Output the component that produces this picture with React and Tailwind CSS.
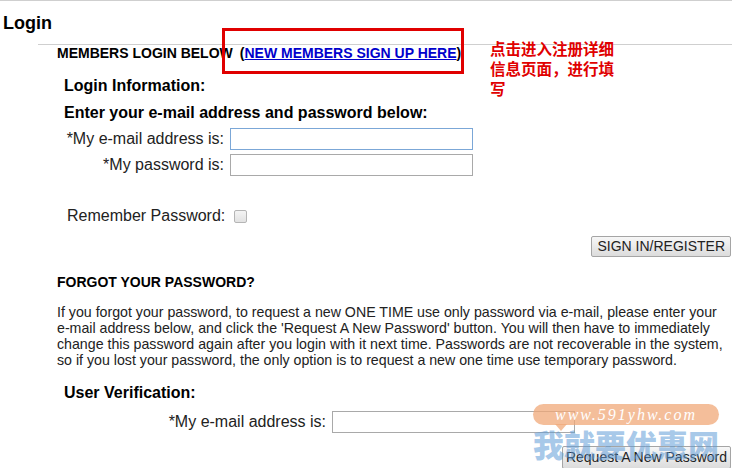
import React from 'react';

const forgotLines = [
  'If you forgot your password, to request a new ONE TIME use only password via e-mail, please enter your',
  "e-mail address below, and click the 'Request A New Password' button. You will then have to immediately",
  'change this password again after you login with it next time. Passwords are not recoverable in the system,',
  'so if you lost your password, the only option is to request a new one time use temporary password.',
];

function FieldRow({ label, labelWidth, inputClass, top }) {
  return (
    <div className={`flex items-center h-[22px] ${top}`}>
      <span className={`${labelWidth} text-right text-[16px] text-[#222] leading-[18px] shrink-0 whitespace-nowrap`}>{label}</span>
      <input type="text" className={`ml-[6px] w-[243px] h-[22px] bg-white ${inputClass}`} />
    </div>
  );
}

export default function App() {
  return (
    <div className="relative w-[732px] h-[468px] overflow-hidden bg-white border-t border-[#cfcfcf] font-['Liberation_Sans',Arial,sans-serif] text-[#111]">
      {/* Page title */}
      <div className="pt-[11px] pl-[3px] h-[33px] text-[18px] leading-[22px] font-bold text-black">Login</div>
      <div className="ml-[38px] mt-[10px] border-t border-[#cfcfcf]" />

      <div className="pl-[57px]">
        <div className="text-[14px] leading-[16px] font-bold text-black whitespace-nowrap">
          MEMBERS LOGIN BELOW<span className="inline-block w-[7px]" />(<a href="#" className="text-[#0000cc] underline">NEW MEMBERS SIGN UP HERE</a>)
        </div>

        <div className="ml-[7px] mt-[16px] text-[16px] leading-[18px] font-bold text-black">Login Information:</div>
        <div className="ml-[7px] mt-[9px] text-[16px] leading-[18px] font-bold text-black">Enter your e-mail address and password below:</div>

        <div className="ml-[7px]">
          <FieldRow label="*My e-mail address is:" labelWidth="w-[160px]" inputClass="border border-[#7ba7d7]" top="mt-[6px]" />
          <FieldRow label="*My password is:" labelWidth="w-[160px]" inputClass="border border-[#a9a9a9]" top="mt-[4px]" />

          <div className="flex items-center mt-[31px] h-[18px]">
            <span className="w-[166px] pl-[3px] text-[16px] text-[#222] leading-[18px] whitespace-nowrap">Remember Password:</span>
            <span className="ml-[4px] w-[13px] h-[13px] rounded-[2px] border border-[#b5b5b5] bg-gradient-to-b from-[#f4f4f4] to-[#e2e2e2]" />
          </div>
        </div>

        <div className="flex justify-end mt-[11px] pr-[1px]">
          <button className="h-[21px] px-[5px] text-[14px] leading-[19px] text-[#222] border border-[#a5a5a5] rounded-[2px] bg-gradient-to-b from-[#f7f7f7] to-[#dcdcdc]">
            SIGN IN/REGISTER
          </button>
        </div>

        <div className="mt-[17px] text-[14px] leading-[16px] font-bold text-black">FORGOT YOUR PASSWORD?</div>
        <p className="mt-[14px] text-[14.2px] leading-[16px] text-[#222]">
          {forgotLines.map((line) => (
            <span key={line} className="block whitespace-nowrap">{line}</span>
          ))}
        </p>

        <div className="ml-[7px] mt-[16px] text-[16px] leading-[18px] font-bold text-black">User Verification:</div>
        <div className="ml-[7px]">
          <FieldRow label="*My e-mail address is:" labelWidth="w-[262px]" inputClass="border border-[#a9a9a9]" top="mt-[9px]" />
        </div>

        <div className="flex justify-end mt-[13px] pr-[1px]">
          <button className="h-[23px] px-[3px] text-[14px] leading-[21px] text-[#222] border border-[#a5a5a5] rounded-[2px] bg-gradient-to-b from-[#f7f7f7] to-[#dcdcdc]">
            Request A New Password
          </button>
        </div>
      </div>

      {/* Annotation box around sign-up link */}
      <div className="absolute left-[222px] top-[27px] w-[242px] h-[46px] border-[3px] border-[#e00000] pointer-events-none" />
      <div className="absolute left-[490px] top-[37px] w-[132px] text-[15.5px] leading-[20px] font-bold text-[#e00000] font-['Noto_Sans_CJK_SC',sans-serif]">
        点击进入注册详细信息页面，进行填写
      </div>

      {/* Watermark */}
      <div className="absolute left-[533px] top-[403px] w-[186px] pointer-events-none">
        <div className="relative h-[21px] rounded-full bg-[#f0a878]/75 flex items-center justify-center">
          <span className="text-[16px] italic text-white tracking-[2px] font-['Liberation_Serif',serif]">www.591yhw.com</span>
          <span className="absolute left-[22px] top-[20px] w-0 h-0 border-l-[6px] border-r-[6px] border-t-[7px] border-l-transparent border-r-transparent border-t-[#f0a878]/75" />
        </div>
        <div className="mt-[3px] text-[31px] leading-[32px] font-black text-[#5d9ad6]/55 font-['Noto_Sans_CJK_SC',sans-serif] whitespace-nowrap">
          我就要优惠网
        </div>
      </div>
    </div>
  );
}
